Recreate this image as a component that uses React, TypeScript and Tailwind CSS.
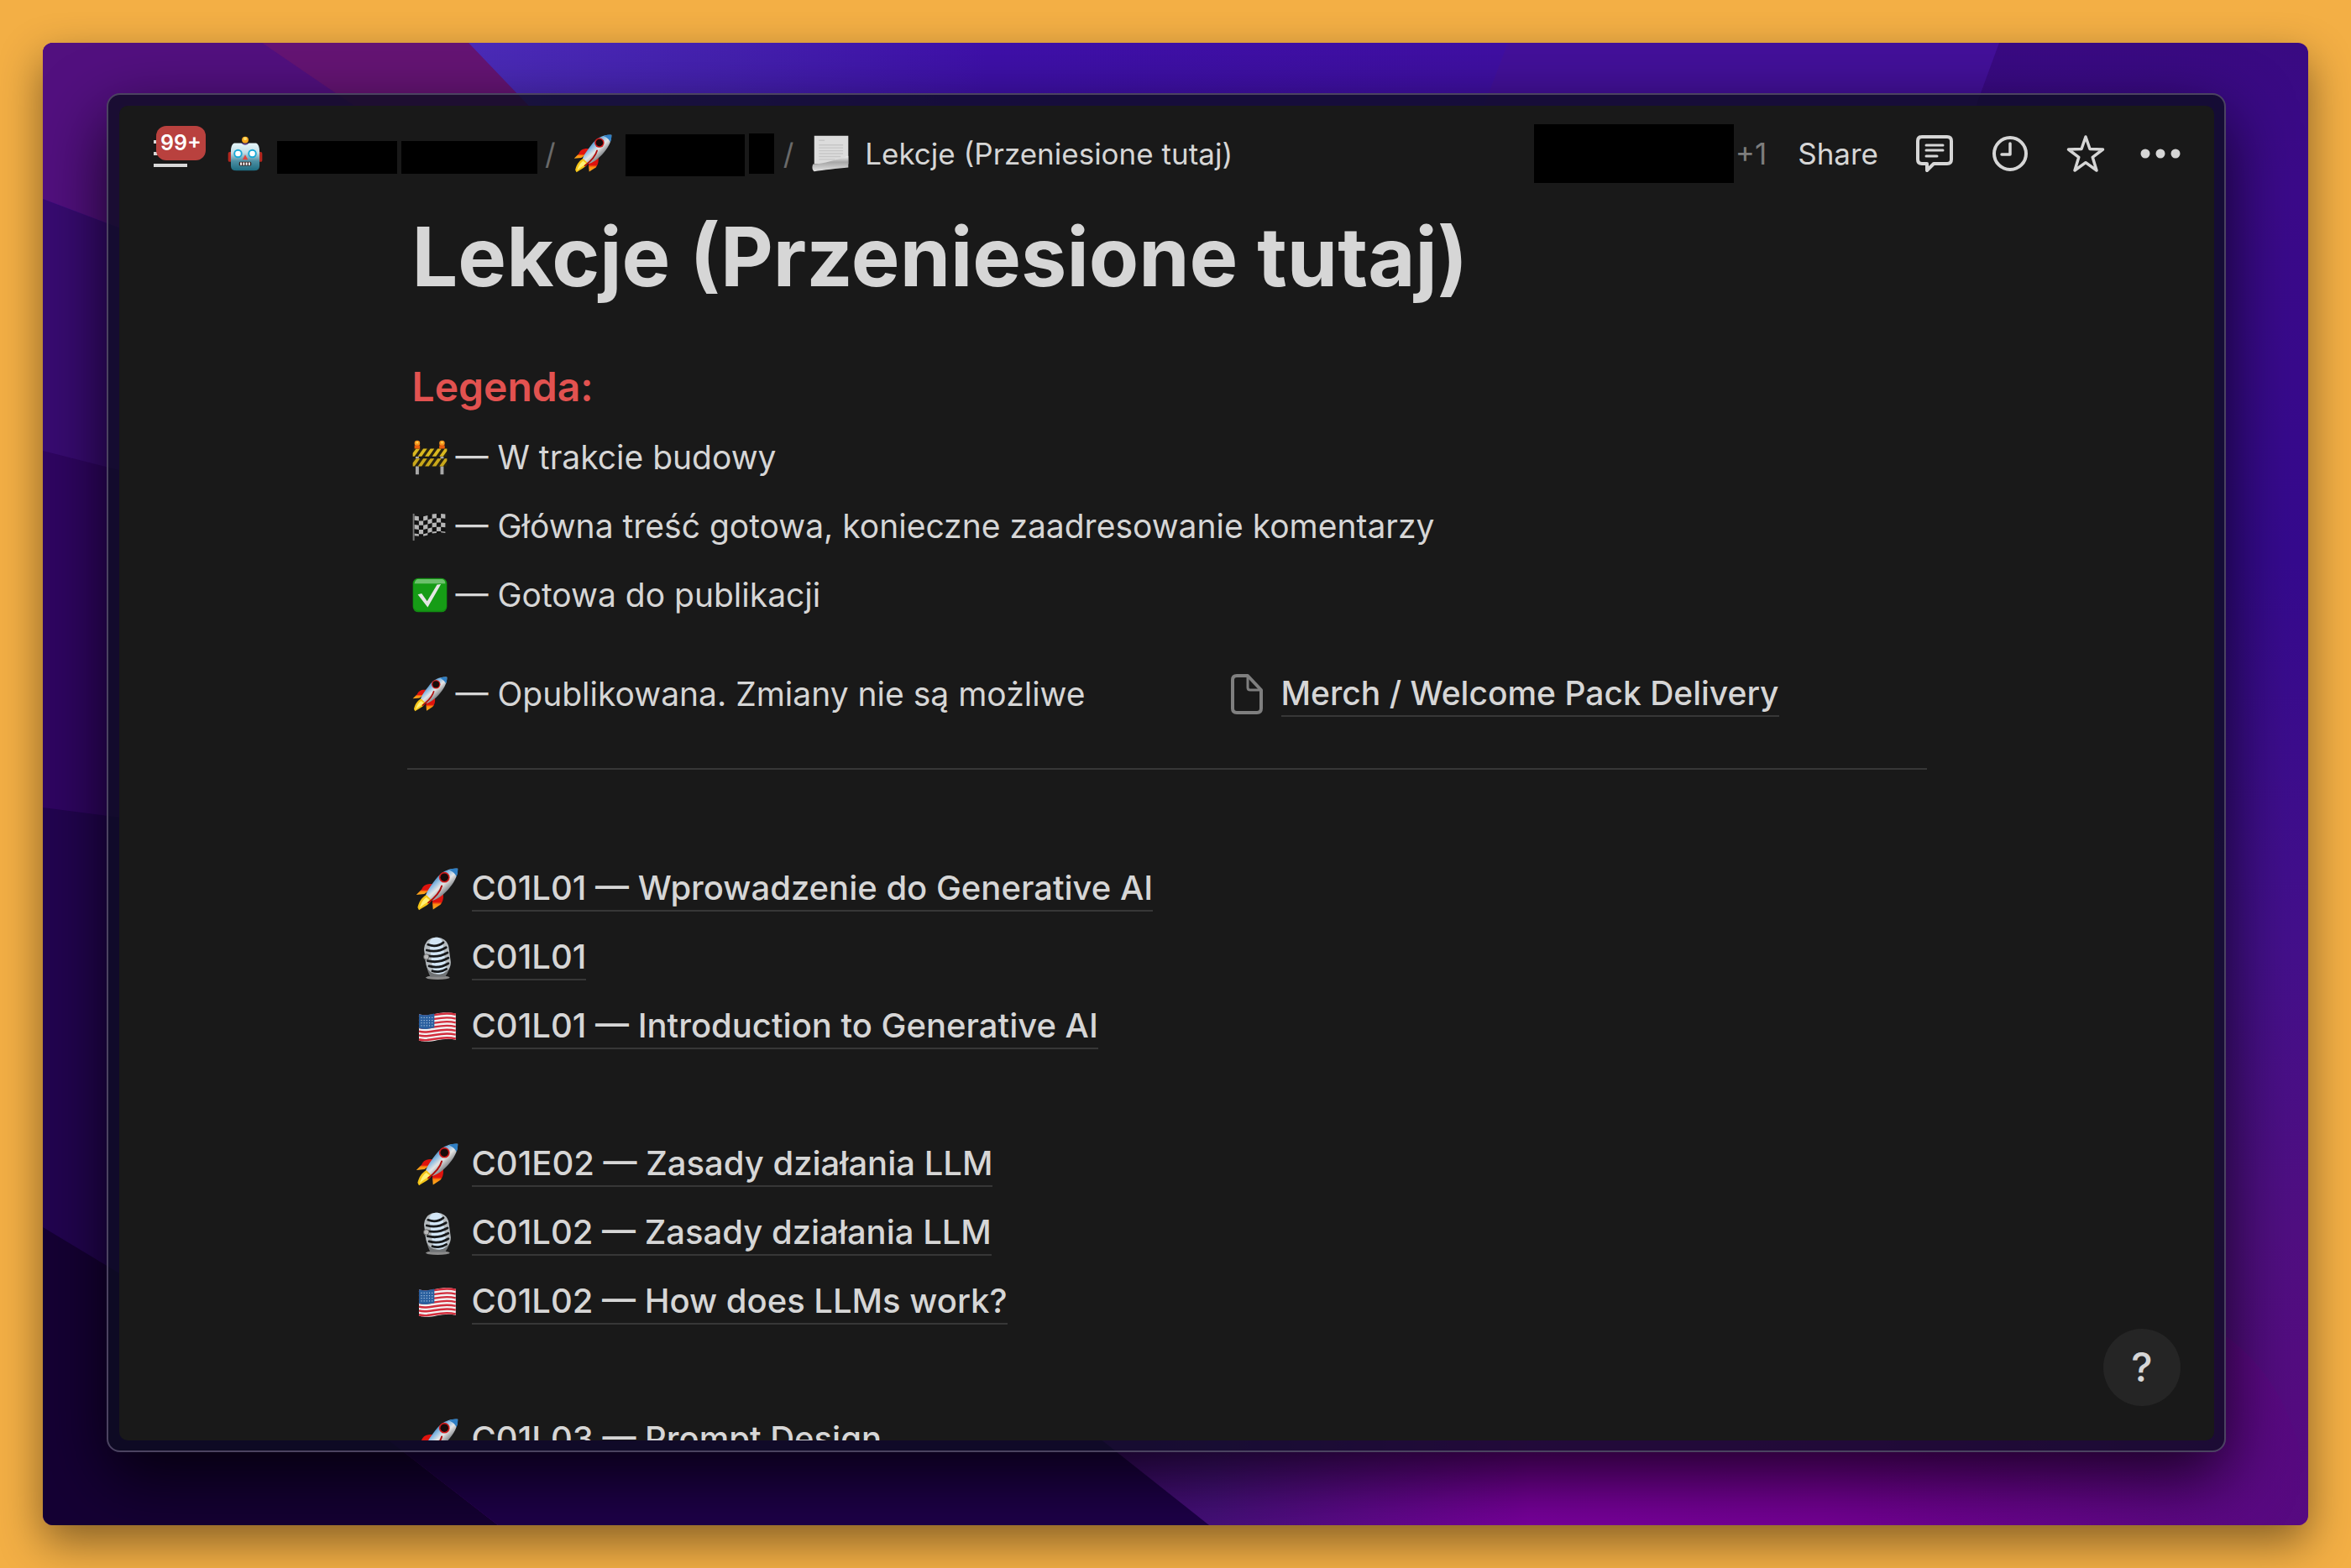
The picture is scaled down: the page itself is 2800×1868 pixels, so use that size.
import React from 'react';

type IconProps = { className?: string };

function Wallpaper({ className }: IconProps) {
  return (
    <svg className={className} viewBox="0 0 2698 1766" preserveAspectRatio="none" aria-hidden="true">
      <defs>
        <linearGradient id="wall-top" x1="0" x2="1" y1="0" y2="0">
          <stop offset="0" stopColor="#4b2bb8" />
          <stop offset="0.25" stopColor="#4420ae" />
          <stop offset="0.5" stopColor="#3e10a8" />
          <stop offset="1" stopColor="#3f0fa2" />
        </linearGradient>
        <linearGradient id="wall-right" x1="0" x2="0" y1="0" y2="1">
          <stop offset="0" stopColor="#390a82" />
          <stop offset="0.1" stopColor="#3b0a8a" />
          <stop offset="0.35" stopColor="#350a8e" />
          <stop offset="0.6" stopColor="#43108c" />
          <stop offset="0.8" stopColor="#500f82" />
          <stop offset="1" stopColor="#570a80" />
        </linearGradient>
        <linearGradient id="wall-bottom" x1="0" x2="1" y1="0" y2="0">
          <stop offset="0" stopColor="#400a70" />
          <stop offset="0.1" stopColor="#47107c" />
          <stop offset="0.36" stopColor="#7a009e" />
          <stop offset="0.6" stopColor="#760097" />
          <stop offset="1" stopColor="#560a80" />
        </linearGradient>
      </defs>
      <rect width="2698" height="1766" fill="url(#wall-right)" />
      <path d="M0 0H2330L2000 900L1350 1000L0 190Z" fill="#43109a" />
      <path d="M507 0H1745L1400 900L1000 900Z" fill="url(#wall-top)" />
      <path d="M1250 1500H2520Q2698 1560 2698 1766H1250Z" fill="url(#wall-bottom)" />
      <path d="M0 0H261L1200 620V640L0 186Z" fill="#52107f" />
      <path d="M261 0H507L1100 620L1200 640Z" fill="#651474" />
      <path d="M0 186L1200 640L1000 760L0 490Z" fill="#380b72" />
      <path d="M0 486L1000 740V1040L0 915Z" fill="#2f0562" />
      <path d="M0 911L1000 1040L1265 1679H430L0 1415Z" fill="#220450" />
      <path d="M0 1411L380 1640L542 1766H0Z" fill="#150034" />
      <path d="M380 1640L1230 1640L1389 1766H542Z" fill="#1e0049" />
    </svg>
  );
}

function Rocket({ className }: IconProps) {
  return (
    <svg className={className} viewBox="0 0 64 64" aria-hidden="true">
      <defs>
        <linearGradient id="rocket-body" x1="0.3" y1="0.2" x2="0.75" y2="0.7">
          <stop offset="0" stopColor="#3478b4" />
          <stop offset="0.3" stopColor="#8dbce2" />
          <stop offset="0.55" stopColor="#e6e6e6" />
          <stop offset="1" stopColor="#6d7176" />
        </linearGradient>
        <linearGradient id="rocket-fin" x1="0" y1="0" x2="0" y2="1">
          <stop offset="0.55" stopColor="#e0130d" />
          <stop offset="0.7" stopColor="#ff8a10" />
          <stop offset="1" stopColor="#ffb020" />
        </linearGradient>
      </defs>
      <path d="M25 24C17 23 11 26 9 32L1 40L13 39L20 34Z" fill="url(#rocket-fin)" />
      <path d="M41 37C42 45 41 50 37 55L26 62L25 50L30 43Z" fill="url(#rocket-fin)" />
      <path d="M63 1C49 0 38 6 30 17C24 25 17 34 15 41L24 49C31 48 41 41 48 33C57 23 63 13 63 1Z" fill="url(#rocket-body)" />
      <path d="M63 1C58 0 54 1 50 3C54 4 60 9 61 13C63 9 63 5 63 1Z" fill="#2f7fc4" />
      <path d="M16 40L24 48C21 54 16 56 5 63L3 59C5 51 8 45 16 40Z" fill="#f5c518" />
      <path d="M16 44L21 48C17 53 12 54 6 60C8 54 10 48 16 44Z" fill="#fff176" />
      <circle cx="43" cy="14" r="8" fill="#d11a1a" />
      <circle cx="43" cy="14" r="6" fill="#180a0a" />
      <path d="M39 27C36 38 28 45 19 52" fill="none" stroke="#b00d0d" strokeWidth="2.5" strokeLinecap="round" />
    </svg>
  );
}

function Robot({ className }: IconProps) {
  return (
    <svg className={className} viewBox="0 0 64 64" aria-hidden="true">
      <defs>
        <linearGradient id="robot-face" x1="0" y1="0" x2="0" y2="1">
          <stop offset="0" stopColor="#e6f6fa" />
          <stop offset="0.35" stopColor="#c3dde5" />
          <stop offset="0.65" stopColor="#4d8fa3" />
          <stop offset="1" stopColor="#1c6b80" />
        </linearGradient>
      </defs>
      <rect x="1" y="29" width="7" height="18" rx="3" fill="#b3261e" />
      <rect x="56" y="29" width="7" height="18" rx="3" fill="#b3261e" />
      <path d="M25 13H39L37 20H27Z" fill="#5d3f86" />
      <circle cx="32" cy="7" r="6" fill="#f6a51c" />
      <circle cx="32" cy="5" r="3" fill="#ffdf6b" />
      <path d="M12 13H25Q32 20 39 13H52Q58 16 58 28V54Q58 63 48 63H16Q6 63 6 54V28Q6 16 12 13Z" fill="url(#robot-face)" />
      <circle cx="19" cy="32" r="8" fill="#19a9d6" />
      <circle cx="45" cy="32" r="8" fill="#19a9d6" />
      <circle cx="19" cy="32" r="5" fill="#fff" />
      <circle cx="45" cy="32" r="5" fill="#fff" />
      <path d="M32 34L37 43H27Z" fill="#e0443c" />
      <rect x="21" y="47" width="22" height="7" rx="2" fill="#3a2320" />
      <path d="M23 48h3v5h-3zM28 48h3v5h-3zM33 48h3v5h-3zM38 48h3v5h-3z" fill="#fff" />
    </svg>
  );
}

function PageCurl({ className }: IconProps) {
  return (
    <svg className={className} viewBox="0 0 64 64" aria-hidden="true">
      <defs>
        <linearGradient id="page-curl" x1="0" y1="0" x2="0" y2="1">
          <stop offset="0" stopColor="#f3f3f3" />
          <stop offset="0.4" stopColor="#a6a6a6" />
          <stop offset="1" stopColor="#e4e4e4" />
        </linearGradient>
      </defs>
      <path d="M4 1H63V50H4Z" fill="#dcdcdc" />
      <path d="M12 9H22M12 17H54M12 22H54M12 27H54M12 32H54M12 37H50M12 42H40" stroke="#c6c6c6" strokeWidth="2" />
      <path d="M2 50C20 50 44 42 63 36V56C44 58 20 60 4 63C0 60 0 54 2 50Z" fill="url(#page-curl)" />
    </svg>
  );
}

function Barrier({ className }: IconProps) {
  return (
    <svg className={className} viewBox="0 0 64 64" aria-hidden="true">
      <path d="M6 30H12V63H6ZM51 30H57V63H51Z" fill="#a8a8a8" />
      <path d="M1 16H63V30H1ZM1 34H63V48H1Z" fill="#2a2410" />
      <path d="M1 24L7 16H14L4 30H1ZM20 16H27L17 30H10ZM33 16H40L30 30H23ZM46 16H53L43 30H36ZM59 16H63V20L56 30H49Z" fill="#d9b81f" />
      <path d="M1 42L7 34H14L4 48H1ZM20 34H27L17 48H10ZM33 34H40L30 48H23ZM46 34H53L43 48H36ZM59 34H63V38L56 48H49Z" fill="#c9a81a" />
      <circle cx="9" cy="6" r="5" fill="#f7931e" />
      <circle cx="54" cy="6" r="5" fill="#f7931e" />
      <path d="M4 10H14V16H4ZM49 10H59V16H49Z" fill="#e85d0c" />
      <circle cx="9" cy="5" r="2" fill="#ffd24a" />
      <circle cx="54" cy="5" r="2" fill="#ffd24a" />
    </svg>
  );
}

function CheckeredFlag({ className }: IconProps) {
  return (
    <svg className={className} viewBox="0 0 64 64" aria-hidden="true">
      <path d="M1 9H4V58H1Z" fill="#777" />
      <path d="M4 12C18 18 32 6 60 10V44C40 42 22 54 4 49Z" fill="#111" />
      <path
        d="M4 13L12 14V22L4 21ZM20 14L28 12V20L20 22ZM36 10L44 9V17L36 18ZM52 9L60 10V18L52 17ZM12 22L20 22V30L12 30ZM28 20L36 18V26L28 28ZM44 17L52 17V25L44 25ZM4 29L12 30V38L4 37ZM20 30L28 28V36L20 38ZM36 26L44 25V33L36 34ZM52 25L60 26V34L52 33ZM12 38L20 38V46L12 46ZM28 36L36 34V42L28 44ZM44 33L52 33V41L44 41ZM4 45L12 46V50L4 49ZM20 46L28 44V48L20 50ZM36 42L44 41V44L36 45ZM52 41L60 42V44L52 43Z"
        fill="#b5b5b5"
      />
    </svg>
  );
}

function CheckMark({ className }: IconProps) {
  return (
    <svg className={className} viewBox="0 0 64 64" aria-hidden="true">
      <rect x="1" y="1" width="62" height="62" rx="10" fill="#128a12" />
      <rect x="2" y="2" width="60" height="58" rx="9" fill="#169c16" />
      <path d="M10 3H54Q60 4 60 11H4Q5 4 10 3Z" fill="#6cc06c" />
      <path d="M10 31L17 29L27 43L45 13L52 12L28 54Z" fill="#e6e6e6" />
    </svg>
  );
}

function StudioMic({ className }: IconProps) {
  return (
    <svg className={className} viewBox="0 0 64 64" aria-hidden="true">
      <ellipse cx="33" cy="61" rx="18" ry="3" fill="#8b8b8b" />
      <path d="M14 34C16 44 18 52 22 60H44C49 52 52 46 52 40L20 30Z" fill="#6f7274" />
      <g transform="rotate(-8 32 28)">
        <rect x="14" y="1" width="37" height="55" rx="17" fill="#b4babe" />
        <rect x="23" y="1" width="20" height="55" rx="9" fill="#d3e6f6" />
        <path d="M21 10C28 14 37 14 44 10M18 18C27 22 38 22 47 18M17 26C27 30 38 30 48 26M17 34C27 38 38 38 48 34M18 42C27 46 38 46 47 42M22 50C28 53 37 53 43 50" fill="none" stroke="#17191b" strokeWidth="3.5" strokeLinecap="round" />
      </g>
      <circle cx="16" cy="30" r="4" fill="#b9b9b9" stroke="#555" />
    </svg>
  );
}

function UsFlag({ className }: IconProps) {
  return (
    <svg className={className} viewBox="0 0 64 64" aria-hidden="true">
      <path d="M5 13C22 18 36 6 60 12V51C38 46 24 58 5 52Z" fill="#f2f2f2" />
      <g fill="none" stroke="#d22d3c" strokeWidth="3">
        <path d="M5 14.500C22 19.500 36 7.500 60 13.500" />
        <path d="M5 20.500C22 25.500 36 13.500 60 19.500" />
        <path d="M5 26.500C22 31.500 36 19.500 60 25.500" />
        <path d="M5 32.500C22 37.500 36 25.500 60 31.500" />
        <path d="M5 38.500C22 43.500 36 31.500 60 37.500" />
        <path d="M5 44.500C22 49.500 36 37.500 60 43.500" />
        <path d="M5 50.500C22 55.500 36 43.500 60 49.500" />
      </g>
      <path d="M5 13C13 15 20 14 28 12V33C20 35 13 36 5 34Z" fill="#2a5f9e" />
      <path d="M8 18H27M8 22H27M8 26H27M8 30H27" stroke="#a9c3e0" strokeWidth="1.500" strokeDasharray="1.500 2.500" />
    </svg>
  );
}

function PageIcon({ className }: IconProps) {
  return (
    <svg className={className} viewBox="0 0 38 48" fill="none" stroke="currentColor" strokeWidth="4" strokeLinejoin="round" aria-hidden="true">
      <path d="M7 2H20L36 19V41Q36 46 31 46H7Q2 46 2 41V7Q2 2 7 2Z" />
      <path d="M20 2V16Q20 19 23 19H36" strokeWidth="3" />
    </svg>
  );
}

function CommentIcon() {
  return (
    <svg className="size-[46px]" viewBox="0 0 46 46" fill="none" stroke="currentColor" strokeWidth="4" strokeLinejoin="round" strokeLinecap="round" aria-hidden="true">
      <path d="M8 3H38Q43 3 43 8V30Q43 35 38 35H22L14 43V35H8Q3 35 3 30V8Q3 3 8 3Z" />
      <path d="M13 13H33M13 19H33M13 26H26" strokeWidth="3" />
    </svg>
  );
}

function ClockIcon() {
  return (
    <svg className="size-[46px]" viewBox="0 0 46 46" fill="none" stroke="currentColor" strokeWidth="4" strokeLinecap="round" strokeLinejoin="round" aria-hidden="true">
      <circle cx="23" cy="23" r="19" />
      <path d="M23 11V24H13" strokeWidth="3.5" />
    </svg>
  );
}

function StarIcon() {
  return (
    <svg className="size-[46px]" viewBox="0 0 46 46" fill="none" stroke="currentColor" strokeWidth="3.500" strokeLinejoin="round" aria-hidden="true">
      <path d="M23 3L28 17.500L43.500 18L31.200 27.300L36 43L23 33.700L10 43L14.800 27.300L2.500 18L18 17.500Z" />
    </svg>
  );
}

function DotsIcon() {
  return (
    <svg className="h-[46px] w-[48px]" viewBox="0 0 48 46" fill="currentColor" aria-hidden="true">
      <circle cx="6" cy="23" r="5.500" />
      <circle cx="24" cy="23" r="5.500" />
      <circle cx="42" cy="23" r="5.500" />
    </svg>
  );
}

const legend = [
  { icon: Barrier, text: 'W trakcie budowy' },
  { icon: CheckeredFlag, text: 'Główna treść gotowa, konieczne zaadresowanie komentarzy' },
  { icon: CheckMark, text: 'Gotowa do publikacji' },
];

const lessons = [
  [
    { icon: Rocket, title: 'C01L01 — Wprowadzenie do Generative AI' },
    { icon: StudioMic, title: 'C01L01' },
    { icon: UsFlag, title: 'C01L01 — Introduction to Generative AI' },
  ],
  [
    { icon: Rocket, title: 'C01E02 — Zasady działania LLM' },
    { icon: StudioMic, title: 'C01L02 — Zasady działania LLM' },
    { icon: UsFlag, title: 'C01L02 — How does LLMs work?' },
  ],
  [{ icon: Rocket, title: 'C01L03 — Prompt Design' }],
];

function LegendRow({ icon: Icon, text }: { icon: React.ComponentType<IconProps>; text: string }) {
  return (
    <p className="flex h-[82px] items-center gap-[10px] text-[39px] whitespace-nowrap">
      <Icon className="size-[42px] shrink-0" />
      — {text}
    </p>
  );
}

function PageLink({ icon: Icon, title }: { icon: React.ComponentType<IconProps>; title: string }) {
  return (
    <a href="#" className="flex h-[82px] items-center gap-[16px] pl-[4px] text-[40px] font-medium whitespace-nowrap">
      <Icon className="size-[51px] shrink-0" />
      <span className="border-b-2 border-[#373737] leading-[52px]">{title}</span>
    </a>
  );
}

function TopBar() {
  return (
    <header className="flex h-[114px] shrink-0 items-center justify-between px-[40px] text-[35px]">
      <nav className="flex items-center" aria-label="Breadcrumb">
        <button type="button" aria-label="Open sidebar" className="relative mr-[26px] ml-[1px] flex h-[32px] w-[62px] flex-col justify-between">
          <span className="h-[4px] w-[40px] bg-[#d8d8d8]" />
          <span className="h-[4px] w-[40px] bg-[#d8d8d8]" />
          <span className="h-[4px] w-[40px] bg-[#d8d8d8]" />
          <span className="absolute -top-[17px] left-[3px] flex h-[41px] w-[59px] items-center justify-center rounded-[12px] bg-[#b9413e] text-[25px] font-semibold text-white">
            99+
          </span>
        </button>
        <Robot className="size-[42px]" />
        <span className="mt-[8px] ml-[17px] h-[39px] w-[143px] bg-black" />
        <span className="mt-[8px] ml-[5px] h-[39px] w-[162px] bg-black" />
        <span className="ml-[9px] text-[#6a6a6a]">/</span>
        <Rocket className="ml-[21px] size-[46px]" />
        <span className="mt-[4px] ml-[16px] h-[50px] w-[142px] bg-black" />
        <span className="ml-[5px] h-[48px] w-[30px] bg-black" />
        <span className="ml-[11px] text-[#6a6a6a]">/</span>
        <PageCurl className="ml-[22px] size-[44px]" />
        <a href="#" className="ml-[19px] whitespace-nowrap">Lekcje (Przeniesione tutaj)</a>
      </nav>
      <div className="flex items-center">
        <span className="h-[70px] w-[238px] bg-black" />
        <span className="ml-[2px] text-[#7d7d7d]">+1</span>
        <button type="button" className="ml-[37px]">Share</button>
        <button type="button" aria-label="Comments" className="ml-[44px]"><CommentIcon /></button>
        <button type="button" aria-label="Updates" className="ml-[44px]"><ClockIcon /></button>
        <button type="button" aria-label="Favorite" className="ml-[44px]"><StarIcon /></button>
        <button type="button" aria-label="More" className="ml-[42px]"><DotsIcon /></button>
      </div>
    </header>
  );
}

export default function App() {
  return (
    <div className="flex h-screen bg-[#f3af45] p-[51px] font-['Inter',sans-serif] text-[#d6d6d6]">
      <div className="relative flex min-w-0 flex-1 overflow-hidden rounded-[12px] pt-[60px] pr-[98px] pb-[87px] pl-[76px] shadow-[0_20px_52px_rgba(0,0,0,0.45)]">
        <Wallpaper className="absolute inset-0 size-full" />
        <div className="relative flex min-w-0 flex-1 rounded-[16px] border-2 border-[#4b4360] bg-[#0d0d20]/80 pt-[13px] pr-[12px] pb-[12px] pl-[13px] shadow-[0_30px_80px_rgba(0,0,0,0.75)]">
          <div className="relative flex min-w-0 flex-1 flex-col overflow-hidden rounded-[10px] bg-[#191919]">
            <TopBar />
            <main className="mx-auto w-full max-w-[1810px]">
              <div className="px-[6px]">
                <h1 className="mt-[2px] text-[97px] leading-[128px] font-bold whitespace-nowrap">Lekcje (Przeniesione tutaj)</h1>
                <h2 className="mt-[50px] mb-[2px] text-[48px] leading-[82px] font-semibold text-[#e25250]">Legenda:</h2>
                {legend.map((row) => (
                  <LegendRow key={row.text} icon={row.icon} text={row.text} />
                ))}
                <div className="mt-[36px] grid grid-cols-2 gap-[152px]">
                  <LegendRow icon={Rocket} text="Opublikowana. Zmiany nie są możliwe" />
                  <a href="#" className="flex h-[82px] items-center gap-[22px] text-[39px] font-medium whitespace-nowrap">
                    <PageIcon className="h-[48px] w-[38px] shrink-0 text-[#7f7f7f]" />
                    <span className="border-b-2 border-[#373737] leading-[52px]">Merch / Welcome Pack Delivery</span>
                  </a>
                </div>
              </div>
              <hr className="mt-[47px] border-t-2 border-[#373737]" />
              <div className="mt-[101px] flex flex-col gap-[82px] px-[6px]">
                {lessons.map((group) => (
                  <section key={group[0].title}>
                    {group.map((item) => (
                      <PageLink key={item.title} icon={item.icon} title={item.title} />
                    ))}
                  </section>
                ))}
              </div>
            </main>
            <button type="button" aria-label="Help" className="absolute right-[40px] bottom-[41px] flex size-[92px] items-center justify-center rounded-full bg-[#252525] text-[48px] font-medium">
              ?
            </button>
          </div>
        </div>
      </div>
    </div>
  );
}
